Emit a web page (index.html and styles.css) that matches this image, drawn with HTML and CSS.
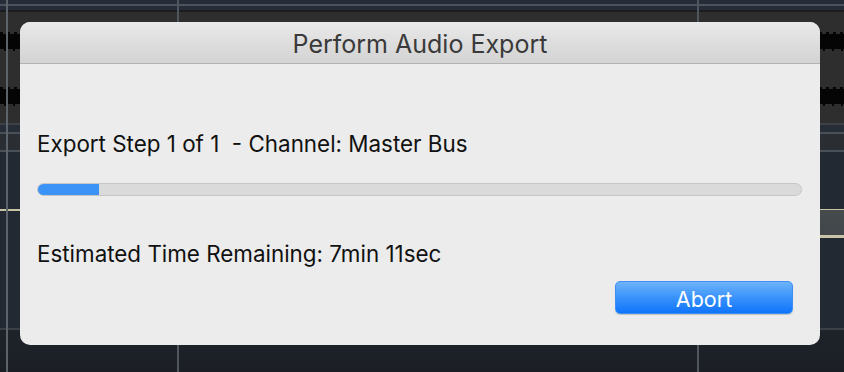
FILE: index.html
```html
<!DOCTYPE html>
<html>
<head>
<meta charset="utf-8">
<title>Perform Audio Export</title>
<link rel="stylesheet" href="styles.css">
</head>
<body>
<div class="desk">
  <div class="dialog">
    <div class="titlebar">Perform Audio Export</div>
    <div class="content">
      <div class="line step">Export Step 1 of 1&nbsp; - Channel: Master Bus</div>
      <div class="progress"><div class="fill" style="width:61px"></div></div>
      <div class="line eta">Estimated Time Remaining: 7min 11sec</div>
      <div class="actions"><button class="abort">Abort</button></div>
    </div>
  </div>
</div>
</body>
</html>
```
FILE: styles.css
```css
html, body {
  margin: 0;
  padding: 0;
  width: 844px;
  height: 372px;
  overflow: hidden;
  background: #1f242b;
}

.desk {
  position: relative;
  width: 844px;
  height: 372px;
  background:
    /* vertical grid lines */
    linear-gradient(90deg, transparent 6px, #5d636a 6px, #5d636a 8px, transparent 8px),
    linear-gradient(90deg, transparent 177px, #50565d 177px, #50565d 179px, transparent 179px),
    linear-gradient(90deg, transparent 697px, #50565d 697px, #50565d 699px, transparent 699px),
    /* waveform jagged edges */
    repeating-linear-gradient(90deg, #050505 0, #050505 3px, transparent 3px, transparent 7px) 0 32px / 100% 2px no-repeat,
    repeating-linear-gradient(90deg, transparent 0, transparent 4px, #050505 4px, #050505 6px, transparent 6px, transparent 9px) 0 49px / 100% 2px no-repeat,
    repeating-linear-gradient(90deg, #050505 0, #050505 3px, transparent 3px, transparent 7px) 0 87px / 100% 2px no-repeat,
    repeating-linear-gradient(90deg, transparent 0, transparent 4px, #050505 4px, #050505 6px, transparent 6px, transparent 9px) 0 104px / 100% 2px no-repeat,
    /* waveform bodies */
    linear-gradient(180deg, transparent 34px, #050505 34px, #050505 49px, transparent 49px,
                             transparent 89px, #050505 89px, #050505 104px, transparent 104px),
    /* track and lanes */
    linear-gradient(180deg,
      #262d38 0, #262d38 4px,
      #4b535d 4px, #4b535d 6px,
      #262d38 6px, #262d38 10px,
      #1c1c1c 10px, #1c1c1c 12px,
      #2e2e2e 12px, #2e2e2e 123px,
      #3c4148 123px, #3c4148 125px,
      #262d37 125px, #262d37 132px,
      #4a5058 132px, #4a5058 134px,
      #2a2d31 134px, #2a2d31 150px,
      #4a5058 150px, #4a5058 152px,
      #222932 152px, #222932 209px,
      #c9c3a6 209px, #c9c3a6 211px,
      #222932 211px, #222932 328px,
      #3a4048 328px, #3a4048 330px,
      #1e232a 330px, #1b1f25 372px);
}

.desk::after {
  content: "";
  position: absolute;
  right: 0;
  top: 210px;
  width: 30px;
  height: 28px;
  background: linear-gradient(180deg, #454b4d 0, #41474a 25px, #cac5a8 25px, #cac5a8 28px);
}

.dialog {
  position: absolute;
  left: 20px;
  top: 22px;
  width: 800px;
  height: 323px;
  border-radius: 10px;
  background: #ececec;
  overflow: hidden;
  display: flex;
  flex-direction: column;
  font-family: Inter, "Noto Sans", "Liberation Sans", sans-serif;
  color: #111;
  z-index: 1;
}

.titlebar {
  height: 42px;
  flex: none;
  border-bottom: 1px solid #b3b3b3;
  background: linear-gradient(180deg, #e9e9e9 0%, #d3d3d3 100%);
  display: flex;
  align-items: center;
  justify-content: center;
  font-size: 25px;
  color: #3a3a3a;
  padding-top: 3px;
  box-sizing: border-box;
}

.content {
  flex: 1;
  display: flex;
  flex-direction: column;
  padding: 67px 18px 0 17px;
}

.line {
  font-size: 22.4px;
  line-height: 26px;
  height: 26px;
  white-space: nowrap;
}

.progress {
  margin-top: 26px;
  height: 11px;
  border: 1px solid #c6c6c6;
  border-radius: 7px;
  background: #dadada;
  overflow: hidden;
}

.fill {
  height: 100%;
  background: #3b93f8;
}

.eta {
  margin-top: 45px;
}

.actions {
  display: flex;
  justify-content: flex-end;
  margin-top: 14px;
  padding-right: 9px;
}

.abort {
  width: 178px;
  height: 33px;
  border: 1px solid #3d8ff5;
  border-radius: 5px;
  background: linear-gradient(180deg, #6db3fb 0%, #3a93fb 50%, #0f74fb 100%);
  color: #fff;
  font-family: Inter, "Noto Sans", "Liberation Sans", sans-serif;
  font-size: 21.5px;
  padding: 2px 0 0;
  box-shadow: 0 1px 1px rgba(0,0,0,0.18);
}
```
